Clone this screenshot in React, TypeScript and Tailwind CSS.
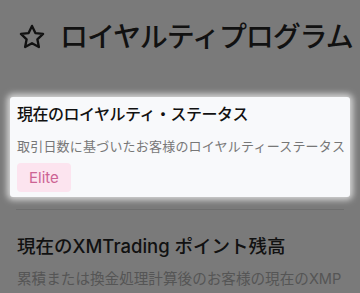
export default function App() {
  return (
    <div
      className="h-[293px] w-[360px] overflow-hidden bg-[#7a7a7a]"
      style={{ fontFamily: '"Inter", "Noto Sans CJK JP", sans-serif' }}
    >
      <div className="flex items-center gap-[14px] whitespace-nowrap pl-[18px] pt-[23px] text-[#111]">
        <svg width="28" height="28" viewBox="0 0 24 24" fill="none" stroke="currentColor" strokeWidth="2" strokeLinejoin="round">
          <path d="M12 2.5l2.9 6.1 6.6.8-4.9 4.6 1.3 6.6L12 17.3l-5.9 3.3 1.3-6.6-4.9-4.6 6.6-.8z" />
        </svg>
        <h1 className="text-[28px] font-medium leading-none tracking-[-1.1px]">ロイヤルティプログラム</h1>
      </div>

      <div className="mx-[10px] mt-[46px] rounded-[3px] bg-[#f8f9fb] px-[7px] pb-[5px] pt-[5px] shadow-[0_0_6px_3px_rgba(255,255,255,0.7)]">
        <h2 className="whitespace-nowrap text-[16px] font-medium leading-[24px] tracking-[-0.5px] text-[#111]">現在のロイヤルティ・ステータス</h2>
        <p className="mt-[10px] whitespace-nowrap text-[13px] leading-[20px] tracking-[0.2px] text-[#777]">取引日数に基づいたお客様のロイヤルティーステータス</p>
        <span className="mt-[7px] inline-block rounded-[4px] bg-[#fce4ef] px-[12px] py-[4px] text-[15px] leading-[21px] text-[#cc6394]">Elite</span>
      </div>

      <div className="mx-[16px] mt-[12px] border-t border-[#6e6e6e]" />

      <div className="px-[17px] pt-[23px]">
        <h2 className="whitespace-nowrap text-[18.5px] font-medium leading-[26px] text-[#111]">現在のXMTrading ポイント残高</h2>
        <p className="mt-[10px] whitespace-nowrap text-[14.6px] leading-[20px] text-[#555]">累積または換金処理計算後のお客様の現在のXMP</p>
      </div>
    </div>
  );
}
